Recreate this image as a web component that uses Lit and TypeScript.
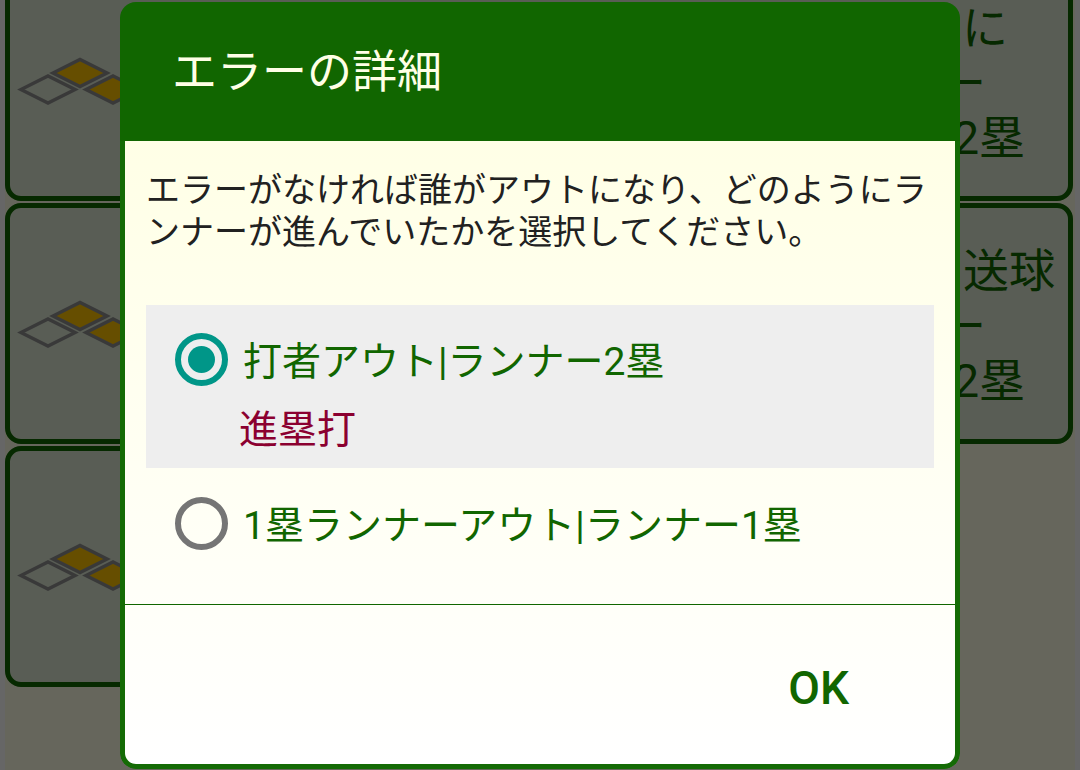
import { LitElement, html, css, svg } from "lit";
import { customElement } from "lit/decorators.js";

const bases = svg`
  <polygon class="empty" points="11,31.5 38,18 65,31.5 38,45"></polygon>
  <polygon class="full" points="43,15 70,1.5 97,15 70,28.5"></polygon>
  <polygon class="full" points="76,31.5 103,18 130,31.5 103,45"></polygon>`;

interface Line { text: string; end: number; }

const cards: { width: string; lines: Line[] }[] = [
  {
    width: "wide",
    lines: [
      { text: "に", end: 60 },
      { text: "ー", end: 82 },
      { text: "2塁", end: 43 },
    ],
  },
  {
    width: "wide",
    lines: [
      { text: "送球", end: 13 },
      { text: "ー", end: 82 },
      { text: "2塁", end: 43 },
    ],
  },
  { width: "narrow", lines: [] },
];

@customElement("app-root")
export class AppRoot extends LitElement {
  static styles = css`
    :host {
      display: block;
      width: 1080px;
      height: 770px;
      overflow: hidden;
      position: relative;
      font-family: Roboto, "Noto Sans CJK JP", sans-serif;
      background: #ffffff;
    }
    .page {
      margin: 0 5px;
      height: 770px;
      background: #ffffe6;
      overflow: hidden;
      display: flex;
      flex-direction: column;
      gap: 2px;
    }
    .list-spacer {
      margin-top: -42px;
    }
    .card {
      box-sizing: border-box;
      flex: none;
      height: 241px;
      border: 5px solid #116600;
      border-radius: 16px;
      background: #dfe9d5;
      display: flex;
      align-items: center;
      justify-content: space-between;
    }
    .card.wide {
      width: 1068px;
    }
    .card.narrow {
      width: 900px;
    }
    .bases {
      width: 145px;
      height: 46px;
      flex: none;
      overflow: visible;
    }
    .bases polygon {
      stroke: #909090;
      stroke-width: 3.5;
    }
    .bases .empty {
      fill: none;
    }
    .bases .full {
      fill: #ffc400;
    }
    .lines {
      display: flex;
      flex-direction: column;
      align-items: flex-end;
      padding-top: 6px;
      font-size: 46px;
      line-height: 55px;
      color: #116600;
      white-space: nowrap;
    }
    .overlay {
      position: absolute;
      inset: 0;
      background: rgba(0, 0, 0, 0.6);
      display: flex;
      justify-content: center;
      padding-top: 2px;
      box-sizing: border-box;
    }
    .dialog {
      width: 840px;
      height: 767px;
      border-radius: 16px;
      overflow: hidden;
      display: flex;
      flex-direction: column;
    }
    .title {
      flex: none;
      box-sizing: border-box;
      height: 139px;
      padding: 0 0 6px 52px;
      background: #116600;
      color: #ffffe6;
      font-size: 45px;
      display: flex;
      align-items: center;
    }
    .content {
      flex: 1;
      display: flex;
      flex-direction: column;
      border: 5px solid #146b05;
      border-top: none;
      border-radius: 0 0 16px 16px;
      background: linear-gradient(#ffffe6, #ffffff);
    }
    .message {
      margin: 28px 21px 0 21px;
      font-size: 34px;
      line-height: 42px;
      color: #212121;
      height: 136px;
    }
    .options {
      margin: 0 21px;
      height: 299px;
    }
    .option.selected {
      background: #eeeeee;
      height: 163px;
    }
    .row {
      display: flex;
      align-items: center;
      gap: 15px;
      height: 108px;
      padding-left: 29px;
      font-size: 39px;
      color: #116600;
    }
    .row .label {
      padding-bottom: 3px;
    }
    .option.plain .row {
      height: 110px;
    }
    .radio {
      box-sizing: border-box;
      flex: none;
      width: 53px;
      height: 53px;
      border-radius: 50%;
      border: 6px solid #757575;
      display: flex;
      align-items: center;
      justify-content: center;
    }
    .radio.on {
      border-color: #009688;
    }
    .radio.on::after {
      content: "";
      width: 27px;
      height: 27px;
      border-radius: 50%;
      background: #009688;
    }
    .sub {
      margin-top: -13px;
      padding-left: 93px;
      font-size: 39px;
      line-height: 60px;
      color: #8b0030;
    }
    .actions {
      flex: 1;
      border-top: 1px solid #116600;
      display: flex;
      align-items: center;
      justify-content: flex-end;
      padding: 6px 106px 0 0;
    }
    .ok {
      border: none;
      background: none;
      padding: 0;
      font: inherit;
      font-size: 46px;
      font-weight: 500;
      color: #116600;
    }
  `;

  render() {
    return html`
      <div class="page">
        <div class="list-spacer"></div>
        ${cards.map(
          (c) => html`
            <div class="card ${c.width}">
              <svg class="bases" viewBox="0 0 145 46">${bases}</svg>
              <div class="lines">
                ${c.lines.map(
                  (l) => html`<span style="padding-right:${l.end}px">${l.text}</span>`
                )}
              </div>
            </div>
          `
        )}
      </div>
      <div class="overlay">
        <div class="dialog">
          <div class="title">エラーの詳細</div>
          <div class="content">
            <div class="message">エラーがなければ誰がアウトになり、どのようにランナーが進んでいたかを選択してください。</div>
            <div class="options">
              <div class="option selected">
                <div class="row"><span class="radio on"></span><span class="label">打者アウト|ランナー2塁</span></div>
                <div class="sub">進塁打</div>
              </div>
              <div class="option plain">
                <div class="row"><span class="radio"></span><span class="label">1塁ランナーアウト|ランナー1塁</span></div>
              </div>
            </div>
            <div class="actions"><button class="ok">OK</button></div>
          </div>
        </div>
      </div>
    `;
  }
}
